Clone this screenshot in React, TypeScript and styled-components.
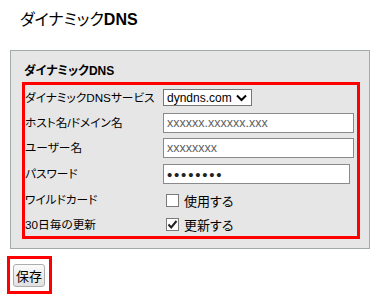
import styled, { createGlobalStyle } from 'styled-components';

const GlobalStyle = createGlobalStyle`
  body {
    margin: 0;
    background: #ffffff;
    font-family: 'Liberation Sans', 'Noto Sans CJK JP', sans-serif;
    font-feature-settings: 'palt';
    color: #000000;
  }
`;

const StyledPage = styled.div`
  width: 376px;
  height: 298px;
  overflow: hidden;
`;

const StyledTitle = styled.h1`
  margin: 0 0 21px;
  padding: 11px 0 0 20px;
  font-size: 16px;
  line-height: 18px;
  font-weight: normal;
`;

const StyledBold = styled.b`
  font-weight: bold;
`;

const StyledPanel = styled.div`
  box-sizing: border-box;
  width: 360px;
  height: 199px;
  margin-left: 10px;
  padding: 12px 9px 0 11px;
  background: #e6e6e6;
  border: 1px solid #a2abab;
`;

const StyledHeading = styled.h2`
  margin: 0 0 3px 2px;
  font-size: 12px;
  line-height: 16px;
  font-weight: bold;
`;

const StyledHighlight = styled.div`
  border: 3px solid #ff0000;
`;

const StyledForm = styled.div`
  display: grid;
  grid-template-columns: 138px 1fr;
  grid-template-rows: 25px 25px 26px 26px 26px 23px;
  align-items: center;
`;

const StyledLabel = styled.span`
  font-size: 11.7px;
  line-height: 14px;
  white-space: nowrap;
`;

const StyledField = styled.div`
  display: flex;
  align-items: center;
`;

const StyledSelect = styled.div`
  box-sizing: border-box;
  display: flex;
  align-items: center;
  justify-content: space-between;
  width: 89px;
  height: 17px;
  padding: 0 4px 0 3px;
  background: #ffffff;
  border: 1px solid #767676;
  font-size: 12px;
`;

const StyledInput = styled.div<{ $width: number; $secret?: boolean }>`
  box-sizing: border-box;
  display: flex;
  align-items: center;
  width: ${(p) => p.$width}px;
  height: 20px;
  padding: 0 3px;
  background: #ffffff;
  border: 1px solid #8a8a8a;
  font-size: ${(p) => (p.$secret ? 15 : 12.5)}px;
  letter-spacing: ${(p) => (p.$secret ? '1.8px' : '0')};
  color: ${(p) => (p.$secret ? '#222222' : '#606060')};
`;

const StyledCheck = styled.label`
  display: flex;
  align-items: center;
  gap: 5px;
  margin-left: 3px;
  font-size: 13px;
`;

const StyledBox = styled.span`
  box-sizing: border-box;
  display: flex;
  align-items: center;
  justify-content: center;
  width: 13px;
  height: 13px;
  background: #ffffff;
  border: 1px solid #7a7a7a;
`;

const StyledSaveFrame = styled.div`
  display: inline-block;
  margin: 7px 0 0 7px;
  padding: 5px 4px 4px 3px;
  border: 3px solid #ff0000;
`;

const StyledButton = styled.button`
  display: block;
  width: 32px;
  height: 23px;
  padding: 0;
  border: 1px solid #adadad;
  border-radius: 3px;
  background: linear-gradient(#fbfbfb, #e0e0e0);
  font-family: 'Liberation Sans', 'Noto Sans CJK JP', sans-serif;
  font-size: 13px;
  color: #000000;
`;

const Chevron = () => (
  <svg width="11" height="8" viewBox="0 0 11 8">
    <path d="M1 1.5 L5.5 6 L10 1.5" fill="none" stroke="#000" strokeWidth="2" />
  </svg>
);

const Checkbox = ({ checked, label }: { checked?: boolean; label: string }) => (
  <StyledCheck>
    <StyledBox>
      {checked && (
        <svg width="11" height="11" viewBox="0 0 11 11">
          <path d="M1.5 5.5 L4.2 8.5 L9.5 2" fill="none" stroke="#222" strokeWidth="2" />
        </svg>
      )}
    </StyledBox>
    {label}
  </StyledCheck>
);

export default function App() {
  return (
    <StyledPage>
      <GlobalStyle />
      <StyledTitle>
        ダイナミック<StyledBold>DNS</StyledBold>
      </StyledTitle>
      <StyledPanel>
        <StyledHeading>ダイナミックDNS</StyledHeading>
        <StyledHighlight>
          <StyledForm>
            <StyledLabel>ダイナミックDNSサービス</StyledLabel>
            <StyledField>
              <StyledSelect>
                <span>dyndns.com</span>
                <Chevron />
              </StyledSelect>
            </StyledField>

            <StyledLabel>ホスト名/ドメイン名</StyledLabel>
            <StyledField>
              <StyledInput $width={191}>xxxxxx.xxxxxx.xxx</StyledInput>
            </StyledField>

            <StyledLabel>ユーザー名</StyledLabel>
            <StyledField>
              <StyledInput $width={191}>xxxxxxxx</StyledInput>
            </StyledField>

            <StyledLabel>パスワード</StyledLabel>
            <StyledField>
              <StyledInput $width={187} $secret>••••••••</StyledInput>
            </StyledField>

            <StyledLabel>ワイルドカード</StyledLabel>
            <StyledField>
              <Checkbox label="使用する" />
            </StyledField>

            <StyledLabel>30日毎の更新</StyledLabel>
            <StyledField>
              <Checkbox checked label="更新する" />
            </StyledField>
          </StyledForm>
        </StyledHighlight>
      </StyledPanel>
      <StyledSaveFrame>
        <StyledButton>保存</StyledButton>
      </StyledSaveFrame>
    </StyledPage>
  );
}
